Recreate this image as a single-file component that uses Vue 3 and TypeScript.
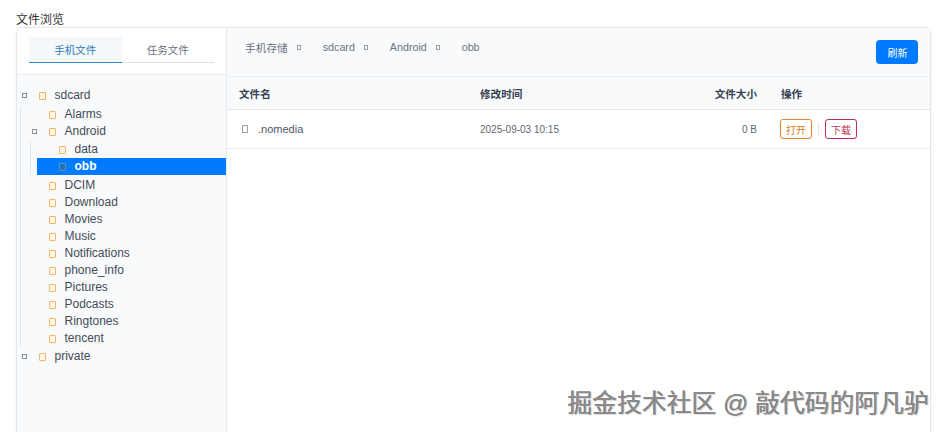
<script setup lang="ts">
import { ref } from 'vue';

interface TreeNode {
    name: string;
    active?: boolean;
    children?: TreeNode[];
    collapsed?: boolean;
}

const activeTab = ref<string>('phone');
const tabs = [
    { key: 'phone', label: '手机文件' },
    { key: 'task', label: '任务文件' }
];
const crumbs = ['手机存储', 'sdcard', 'Android', 'obb'];

const plain = (names: string[]): TreeNode[] => names.map((name) => ({ name }));

// 目录树
const tree: TreeNode[] = [
    {
        name: 'sdcard',
        children: [
            { name: 'Alarms' },
            {
                name: 'Android',
                children: [{ name: 'data' }, { name: 'obb', active: true }]
            },
            ...plain(['DCIM', 'Download', 'Movies', 'Music', 'Notifications', 'phone_info', 'Pictures', 'Podcasts', 'Ringtones', 'tencent'])
        ]
    },
    { name: 'private', collapsed: true }
];

const flatRows = (node: TreeNode) => node.children ?? [];
</script>

<template>
    <div class="page">
        <div class="title">文件浏览</div>
        <div class="card">
            <aside class="side">
                <div class="side-head">
                    <div class="tabs">
                        <div
                            v-for="tab in tabs"
                            :key="tab.key"
                            class="tab"
                            :class="{ on: activeTab === tab.key }"
                            @click="activeTab = tab.key"
                        >
                            {{ tab.label }}
                        </div>
                    </div>
                </div>
                <div class="tree">
                    <template v-for="root in tree" :key="root.name">
                        <div class="node">
                            <i class="toggle"></i>
                            <i class="folder"></i>
                            <span>{{ root.name }}</span>
                        </div>
                        <div v-if="root.children" class="kids">
                            <template v-for="item in flatRows(root)" :key="item.name">
                                <div class="node">
                                    <i v-if="item.children" class="toggle"></i>
                                    <i v-else class="toggle blank"></i>
                                    <i class="folder"></i>
                                    <span>{{ item.name }}</span>
                                </div>
                                <div v-if="item.children" class="kids inner">
                                    <div
                                        v-for="leaf in item.children"
                                        :key="leaf.name"
                                        class="node"
                                        :class="{ active: leaf.active }"
                                    >
                                        <i class="toggle blank"></i>
                                        <i class="folder"></i>
                                        <span>{{ leaf.name }}</span>
                                    </div>
                                </div>
                            </template>
                        </div>
                    </template>
                </div>
            </aside>
            <main class="main">
                <div class="toolbar">
                    <div class="crumbs">
                        <template v-for="(crumb, i) in crumbs" :key="crumb">
                            <span class="crumb">{{ crumb }}</span>
                            <i v-if="i < crumbs.length - 1" class="sep"></i>
                        </template>
                    </div>
                    <button class="refresh">刷新</button>
                </div>
                <div class="grid head">
                    <div>文件名</div>
                    <div>修改时间</div>
                    <div class="right">文件大小</div>
                    <div>操作</div>
                </div>
                <div class="grid row">
                    <div class="name"><i class="file"></i>.nomedia</div>
                    <div>2025-09-03 10:15</div>
                    <div class="right">0 B</div>
                    <div class="actions">
                        <button class="act open">打开</button>
                        <i class="divider"></i>
                        <button class="act down">下载</button>
                    </div>
                </div>
            </main>
        </div>
        <div class="mark">掘金技术社区 @ 敲代码的阿凡驴</div>
    </div>
</template>

<style>
html,
body {
    margin: 0;
    height: 100%;
    overflow: hidden;
    background: #fff;
}
</style>

<style scoped>
.page {
    position: relative;
    height: 432px;
    box-sizing: border-box;
    padding: 13px 14px 0 16px;
    overflow: hidden;
    font-family: "Liberation Sans", "Noto Sans CJK SC", sans-serif;
    color: #454b55;
}

.title {
    height: 14px;
    font-size: 12px;
    line-height: 14px;
    color: #333;
}

.card {
    display: flex;
    height: 440px;
    box-sizing: border-box;
    border: 1px solid #e2e5e9;
    border-radius: 6px;
    box-shadow: 0 1px 4px rgba(0, 0, 0, 0.06);
    overflow: hidden;
}

.side {
    width: 210px;
    flex: none;
    box-sizing: border-box;
    border-right: 1px solid #e6e9ed;
    background: #f8fafc;
}

.side-head {
    height: 47px;
    box-sizing: border-box;
    padding: 9px 12px 0;
    background: #fff;
    border-bottom: 1px solid #e9ecef;
}

.tabs {
    display: flex;
    border-bottom: 1px solid #dfe3e8;
}

.tab {
    width: 93px;
    height: 26px;
    margin-bottom: -1px;
    font-size: 10.5px;
    line-height: 27px;
    text-align: center;
    color: #6b7280;
    box-sizing: border-box;
}

.tab.on {
    color: #2f7bb5;
    background: #f4f8fb;
    border-bottom: 1px solid #2f86c5;
}

.tree {
    padding-top: 12px;
    font-size: 12px;
}

.node {
    display: flex;
    align-items: center;
    height: 17px;
    line-height: 17px;
    white-space: nowrap;
}

.node span {
    margin-left: -0.5px;
}

.node.active {
    background: #007bff;
    color: #fff;
    font-weight: 700;
}

.kids {
    margin: 2px 0 1px 3px;
    padding-left: 6px;
    border-left: 1px solid #e2e6ea;
}

.kids.inner {
    margin: 1px 0 2px 3px;
}

.toggle {
    width: 5px;
    height: 5px;
    flex: none;
    margin: 0 12px 0 5px;
    box-sizing: border-box;
    border: 1px solid #8a8f96;
}

.toggle.blank {
    border-color: transparent;
}

.folder {
    width: 7px;
    height: 8px;
    flex: none;
    margin-right: 9px;
    box-sizing: border-box;
    border: 1px solid #f3b562;
    border-radius: 1px;
    background: #fdf6ea;
}

.active .folder {
    border-color: #5a98b5;
    background: #1f6fc0;
}

.main {
    flex: 1;
    min-width: 0;
    background: #fff;
}

.toolbar {
    display: flex;
    justify-content: space-between;
    height: 49px;
    box-sizing: border-box;
    padding: 12px 12px 0 18px;
    background: #f8fafc;
    border-bottom: 1px solid #eceff2;
}

.crumbs {
    display: flex;
    align-items: center;
    height: 14px;
    font-size: 10.7px;
    color: #6b7280;
}

.sep {
    width: 4px;
    height: 5px;
    box-sizing: border-box;
    margin: 0 21.5px 0 9.5px;
    border: 1px solid #9a9ea5;
}

.refresh {
    width: 42px;
    height: 24px;
    align-self: flex-start;
    padding: 0 0 0 1px;
    border: 0;
    border-radius: 4px;
    background: #007bff;
    color: #fff;
    font-family: inherit;
    font-size: 10px;
}

.grid {
    display: grid;
    grid-template-columns: 241px 1fr 100px 173px;
    align-items: center;
    padding-left: 12px;
}

.grid > :last-child {
    padding-left: 24px;
}

.head {
    height: 33px;
    box-sizing: border-box;
    background: #f8fafc;
    border-bottom: 1px solid #e2e6ea;
    font-size: 10.6px;
    font-weight: 700;
    color: #374151;
}

.row {
    height: 39px;
    box-sizing: border-box;
    border-bottom: 1px solid #e9ecef;
    font-size: 10px;
    color: #5f6670;
}

.right {
    text-align: right;
}

.name {
    display: flex;
    align-items: center;
    font-size: 11px;
    color: #4b5563;
}

.file {
    width: 6px;
    height: 8px;
    box-sizing: border-box;
    margin: 0 10px 0 3px;
    border: 1px solid #9a9ea5;
}

.actions {
    display: flex;
    align-items: center;
    margin-left: -1px;
}

.act {
    width: 32px;
    height: 20px;
    padding: 0;
    background: #fff;
    border-radius: 3px;
    font-family: inherit;
    font-size: 10px;
}

.open {
    border: 1px solid #e08a2e;
    color: #d97f20;
}

.down {
    border: 1px solid #b8324f;
    color: #b8324f;
}

.divider {
    width: 1px;
    height: 15px;
    margin: 0 6px;
    background: #e2e6ea;
}

.mark {
    position: absolute;
    right: 16px;
    bottom: 13px;
    font-size: 24.8px;
    line-height: 30px;
    white-space: nowrap;
    color: #8a8a8a;
    text-shadow: -0.4px -0.4px 0 #777, 1px 1px 0 #dcdcdc;
    pointer-events: none;
}
</style>
